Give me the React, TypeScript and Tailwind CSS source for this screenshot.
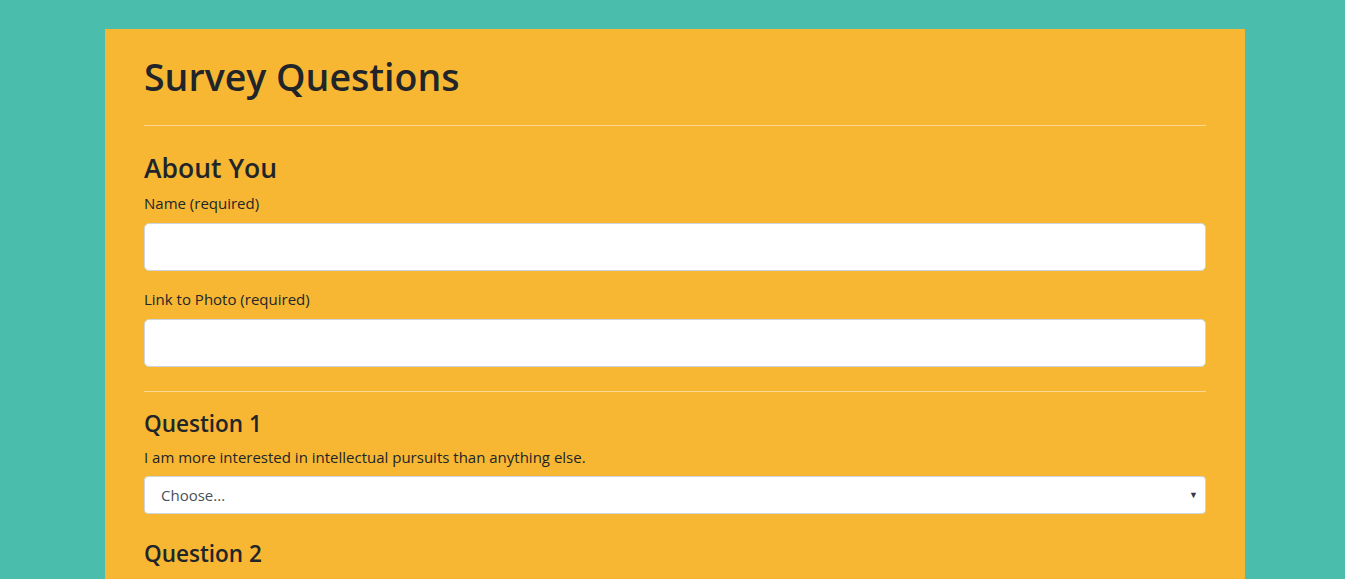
import { ChangeEvent, useState } from 'react';

const font = { fontFamily: '"Open Sans", "Noto Sans", Arial, sans-serif' };

function TextField({ label }: { label: string }) {
  const [value, setValue] = useState('');
  return (
    <div>
      <label className="block text-[15px] leading-6 text-[#212529]">{label}</label>
      <input
        value={value}
        onChange={(e: ChangeEvent<HTMLInputElement>) => setValue(e.target.value)}
        className="mt-2 block h-12 w-full rounded-[5px] border border-[#ced4da] bg-white px-4 text-xl text-[#495057] outline-none"
      />
    </div>
  );
}

function Question({ n, text }: { n: number; text: string }) {
  return (
    <div>
      <h4 className="text-[22.5px] leading-[29px] font-semibold text-[#212529]">Question {n}</h4>
      <p className="mt-[7px] text-[15px] leading-6 text-[#212529]">{text}</p>
      <div className="relative mt-[7px]">
        <select className="block h-[38px] w-full appearance-none rounded-[4px] border border-[#ced4da] bg-white pl-4 pr-8 text-[15px] text-[#495057] outline-none">
          <option>Choose...</option>
          <option>1 (Strongly Disagree)</option>
          <option>2</option>
          <option>3</option>
          <option>4</option>
          <option>5 (Strongly Agree)</option>
        </select>
        <span className="pointer-events-none absolute right-[8px] top-[12px] text-[9px] text-[#343a40]">▼</span>
      </div>
    </div>
  );
}

export default function App() {
  return (
    <div className="min-h-screen bg-[#4abdac] pt-[29px] pl-[5px]" style={font}>
      <div className="mx-auto w-[1140px] bg-[#f7b733] px-[39px] pb-10">
        <h1 className="pt-6 text-[37.5px] leading-[48px] font-semibold text-[#212529]">Survey Questions</h1>
        <hr className="mt-6 border-t border-[#fbd990]" />
        <h3 className="mt-[25px] text-[26.5px] leading-[34px] font-semibold text-[#212529]">About You</h3>
        <div className="mt-[6px] flex flex-col gap-4">
          <TextField label="Name (required)" />
          <TextField label="Link to Photo (required)" />
        </div>
        <hr className="mt-6 border-t border-[#fbd990]" />
        <div className="mt-[17px] flex flex-col gap-[25px]">
          <Question n={1} text="I am more interested in intellectual pursuits than anything else." />
          <Question n={2} text="I enjoy spending time outdoors." />
        </div>
      </div>
    </div>
  );
}
